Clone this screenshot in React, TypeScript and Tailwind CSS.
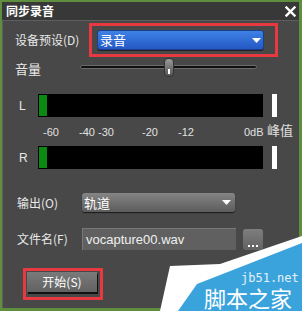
import React from "react";

function Tri() {
  return (
    <svg width="9" height="5" viewBox="0 0 9 5" className="shrink-0">
      <polygon points="0,0 9,0 4.5,5" fill="#ffffff" />
    </svg>
  );
}

function Meter() {
  return (
    <div className="w-[225px] h-full bg-black p-[1px]">
      <div className="w-[8px] h-full bg-[#0b8a12]" />
    </div>
  );
}

export default function App() {
  return (
    <div
      className="relative w-[302px] h-[311px] overflow-hidden bg-[#5e8e3e] pt-[2px] pl-[2px] pr-[3px] pb-[3px] flex flex-col text-[#e8e8e8]"
      style={{ fontFamily: '"Liberation Sans", "Noto Sans CJK SC", sans-serif' }}
    >
      {/* title bar */}
      <div className="h-[18px] shrink-0 bg-[#383838] flex items-center justify-between pl-[4px] pr-[3px]">
        <span className="text-[12px] font-bold text-white leading-none" style={{ fontFamily: '"Noto Sans CJK SC", sans-serif' }}>
          同步录音
        </span>
        <svg width="11" height="11" viewBox="0 0 11 11">
          <path d="M1.5 1.5 L9.5 9.5 M9.5 1.5 L1.5 9.5" stroke="#ffffff" strokeWidth="2.4" strokeLinecap="square" />
        </svg>
      </div>

      {/* body */}
      <div className="flex-1 bg-[#484848] border-l border-t border-[#5e5e5e] flex flex-col text-[12px]">
        {/* device preset */}
        <div className="mt-[2px] h-[34px] flex items-center">
          <div className="w-[86px] pl-[12px]" style={{ fontFamily: '"Noto Sans CJK SC", sans-serif' }}>
            设备预设(D)
          </div>
          <div className="w-[189px] h-[34px] border-[3px] border-[#e83840] flex items-center pl-[5px]">
            <div className="w-[167px] h-[20px] rounded-[3px] bg-gradient-to-b from-[#3f82e6] to-[#2458c4] border border-[#1d3f8a] flex items-center justify-between pl-[2px] pr-[2px] text-white text-[13px] shadow-[0_1px_0_#222]">
              <span style={{ fontFamily: '"Noto Sans CJK SC", sans-serif' }}>录音</span>
              <Tri />
            </div>
          </div>
        </div>

        {/* volume */}
        <div className="h-[20px] flex items-center">
          <div className="w-[77px] pl-[12px] pt-[4px] text-[13px]" style={{ fontFamily: '"Noto Sans CJK SC", sans-serif' }}>
            音量
          </div>
          <div className="relative w-[177px] h-full flex items-center">
            <div className="w-full h-[4px] mb-[1px] rounded-[2px] bg-[#111] border border-[#6a6a6a]" />
            <div className="absolute left-[84px] top-[1px] w-[10px] h-[19px] rounded-[4px] bg-gradient-to-b from-[#9a9a9a] to-[#555] border border-[#333] flex items-end justify-center pb-[2px]">
              <div className="w-[2px] h-[5px] bg-white" />
            </div>
          </div>
        </div>

        {/* L meter */}
        <div className="mt-[17px] h-[23px] flex items-center">
          <div className="w-[35px] pl-[16px] text-[12px]">L</div>
          <Meter />
          <div className="ml-[9px] w-[5px] h-full bg-white" />
        </div>

        {/* scale */}
        <div className="relative mt-[8px] h-[14px] text-[11px] text-[#e0e0e0] leading-[14px]">
          <span className="absolute left-[40px]">-60</span>
          <span className="absolute left-[76px]">-40</span>
          <span className="absolute left-[95px]">-30</span>
          <span className="absolute left-[139px]">-20</span>
          <span className="absolute left-[175px]">-12</span>
          <span className="absolute left-[241px]">0dB</span>
          <span className="absolute left-[264px] text-[13px] top-[-2px]" style={{ fontFamily: '"Noto Sans CJK SC", sans-serif' }}>峰值</span>
        </div>

        {/* R meter */}
        <div className="mt-[7px] h-[23px] flex items-center">
          <div className="w-[35px] pl-[16px] text-[12px]">R</div>
          <Meter />
          <div className="ml-[9px] w-[5px] h-full bg-white" />
        </div>

        {/* output */}
        <div className="mt-[24px] h-[19px] flex items-center">
          <div className="w-[79px] pl-[14px]" style={{ fontFamily: '"Noto Sans CJK SC", sans-serif' }}>
            输出(O)
          </div>
          <div className="w-[153px] h-[19px] rounded-[3px] bg-gradient-to-b from-[#858585] to-[#5c5c5c] flex items-center justify-between pl-[2px] pr-[4px] text-white text-[13px] shadow-[0_1px_1px_#1a1a1a]">
            <span style={{ fontFamily: '"Noto Sans CJK SC", sans-serif' }}>轨道</span>
            <Tri />
          </div>
        </div>

        {/* filename */}
        <div className="mt-[16px] h-[22px] flex items-center">
          <div className="w-[79px] pl-[14px]" style={{ fontFamily: '"Noto Sans CJK SC", sans-serif' }}>
            文件名(F)
          </div>
          <div className="w-[154px] h-[22px] bg-[#606060] border-t border-l border-[#787878] flex items-center pl-[3px] text-[13px] text-[#f0f0f0]">
            vocapture00.wav
          </div>
          <div className="ml-[7px] w-[20px] h-[21px] rounded-[3px] bg-gradient-to-b from-[#7e7e7e] to-[#626262] flex items-end justify-center pb-[3px] gap-[2px]">
            <div className="w-[2px] h-[2px] bg-white" />
            <div className="w-[2px] h-[2px] bg-white" />
            <div className="w-[2px] h-[2px] bg-white" />
          </div>
        </div>

        {/* start */}
        <div className="mt-[18px] ml-[20px] w-[80px] h-[32px] border-[3px] border-[#e83840] pl-[1px] pt-[1px]">
          <div className="w-[70px] h-[20px] bg-gradient-to-b from-[#7a7a7a] to-[#626262] shadow-[1px_2px_0_#111] flex items-center justify-center text-white text-[12px]" style={{ fontFamily: '"Noto Sans CJK SC", sans-serif' }}>
            开始(S)
          </div>
        </div>
      </div>

      {/* watermark overlay */}
      <svg className="absolute left-0 top-0 pointer-events-none" width="302" height="311" viewBox="0 0 302 311">
        <polygon points="160,311 170,266 220,264 302,236 302,311" fill="#ffffff" />
        <polygon points="178,311 197,284 302,243 302,311" fill="#3ba3dc" />
      </svg>
      <div className="absolute left-[241px] top-[272px] text-[12px] leading-[12px] text-[#e4f2fb] pointer-events-none" style={{ fontFamily: '"DejaVu Sans Mono", monospace' }}>
        jb51.net
      </div>
      <div className="absolute left-[204px] top-[286px] text-[22px] leading-[22px] text-white pointer-events-none" style={{ fontFamily: '"Noto Sans CJK SC", sans-serif' }}>
        脚本之家
      </div>
    </div>
  );
}
